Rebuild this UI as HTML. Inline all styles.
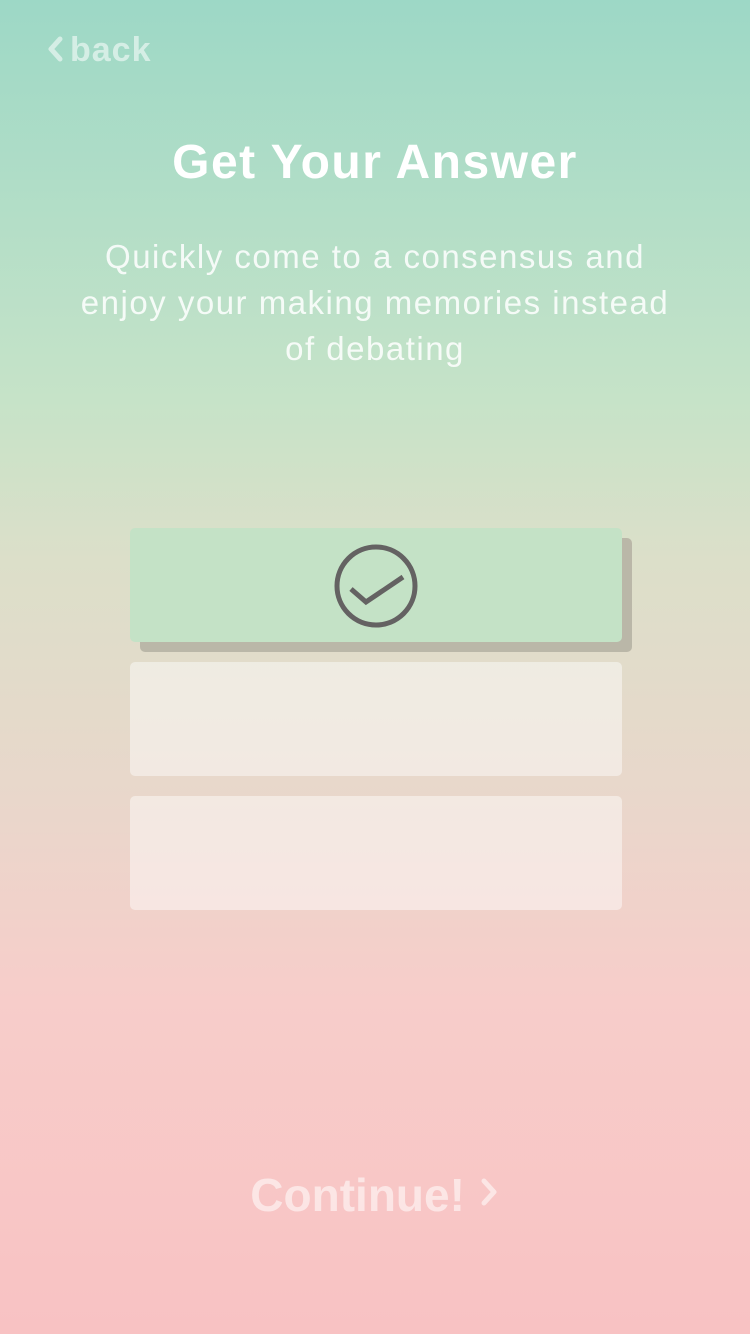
<!DOCTYPE html>
<html><head><meta charset="utf-8"><style>
body{margin:0;width:750px;height:1334px;overflow:hidden;font-family:"Liberation Sans",sans-serif;
background:linear-gradient(to bottom,#9dd8c6 0%,#c6e3c8 30%,#dcdfc9 42%,#e9d7cb 60%,#f7cdca 75%,#f8c2c3 100%);position:relative}
.back{position:absolute;left:46px;top:31px;font-size:34px;font-weight:bold;color:rgba(255,255,255,.55);letter-spacing:1px}
h1{position:absolute;top:135px;left:0;width:750px;text-align:center;margin:0;color:#fff;font-size:48px;font-weight:bold;letter-spacing:1.5px}
p{position:absolute;top:234px;left:0;width:750px;text-align:center;margin:0;color:rgba(255,255,255,.85);font-size:33px;line-height:46px;letter-spacing:1.5px}
.sh{position:absolute;left:140px;top:538px;width:492px;height:114px;background:#bab7a8;border-radius:5px}
.c{position:absolute;left:130px;width:492px;height:114px;border-radius:5px}
.cont{position:absolute;top:1168px;left:0;width:750px;text-align:center;color:rgba(255,255,255,.55);font-size:46px;font-weight:bold}
</style></head><body>
<div class="back"><svg width="18" height="28" viewBox="0 0 18 28" style="vertical-align:-2px;margin-right:6px"><path d="M14 4 L5 14 L14 24" fill="none" stroke="rgba(255,255,255,.55)" stroke-width="5" stroke-linecap="round" stroke-linejoin="round"/></svg>back</div>
<h1>Get Your Answer</h1>
<p>Quickly come to a consensus and<br>enjoy your making memories instead<br>of debating</p>
<div class="sh"></div>
<div class="c" style="top:528px;background:#c4e2c6"></div>
<svg style="position:absolute;left:330px;top:540px" width="92" height="92" viewBox="0 0 92 92"><circle cx="46" cy="46" r="39" fill="none" stroke="#646262" stroke-width="5"/><path d="M21 49 L36 62 L73 37" fill="none" stroke="#646262" stroke-width="5"/></svg>
<div class="c" style="top:662px;background:rgba(255,255,255,.45)"></div>
<div class="c" style="top:796px;background:rgba(255,255,255,.45)"></div>
<div class="cont">Continue! <svg width="22" height="34" viewBox="0 0 22 34" style="vertical-align:2px"><path d="M6 6 L16 17 L6 28" fill="none" stroke="rgba(255,255,255,.55)" stroke-width="5" stroke-linecap="round" stroke-linejoin="round"/></svg></div>
</body></html>
